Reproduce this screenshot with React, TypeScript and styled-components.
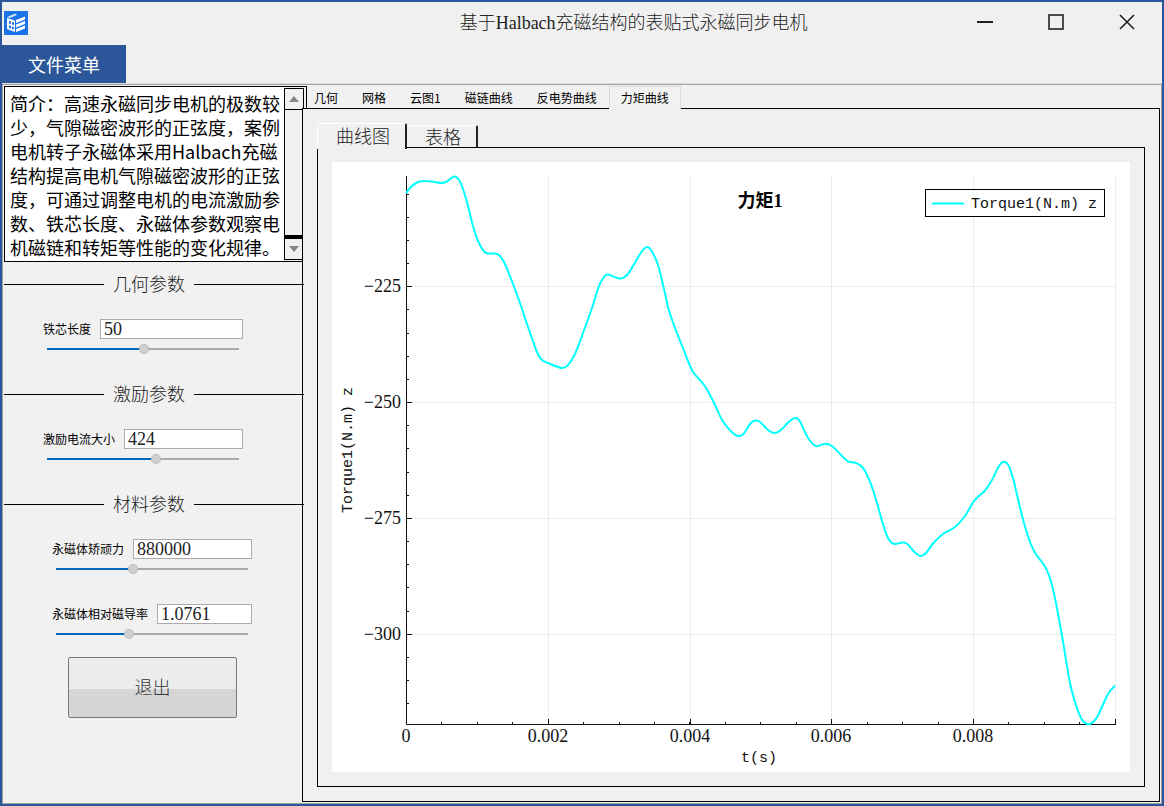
import React, { useId, useState } from "react";
import styled, { createGlobalStyle } from "styled-components";

const SANS = '"Noto Sans CJK SC", sans-serif';
const SERIF = '"Liberation Serif", "Noto Sans CJK SC", serif';
const MONO = '"Liberation Mono", "Noto Sans CJK SC", monospace';

const GlobalStyle = createGlobalStyle`
  *, *::before, *::after { box-sizing: border-box; }
  body { margin: 0; background: #f0f0f0; font-family: ${SANS}; color: #000; }
  button, input, textarea { font-family: inherit; margin: 0; }
`;

const Window = styled.div`
  display: flex;
  flex-direction: column;
  min-height: 100vh;
  border: 2px solid #2b579a;
  background: #f0f0f0;
`;

const TitleBar = styled.header`
  display: grid;
  grid-template-columns: 9fr auto 7fr;
  align-items: center;
  height: 43px;
  padding: 0 0 1px 2px;
`;

const Title = styled.h1`
  margin: 0;
  font: 300 18px/24px ${SERIF};
  color: #222;
`;

const WindowButtons = styled.div`
  display: flex;
  align-self: start;
  justify-content: flex-end;
`;

const WindowButton = styled.button`
  display: flex;
  align-items: center;
  justify-content: center;
  width: 71px;
  height: 40px;
  padding: 0;
  border: 0;
  background: transparent;
`;

const MenuBar = styled.nav`
  display: flex;
  height: 39px;
  border-bottom: 1px solid #dcdcdc;
`;

const MenuButton = styled.button`
  width: 124px;
  padding: 0;
  border: 0;
  background: #2b579a;
  color: #fff;
  font-size: 18px;
  line-height: 24px;
`;

const Workspace = styled.div`
  display: grid;
  flex: 1;
  grid-template-columns: 299px minmax(0, 1fr);
  border: 1px solid #a0a0a0;
  background: #f1f1f1;
`;

const Sidebar = styled.aside`
  display: flex;
  flex-direction: column;
  padding: 1px 0 0 1px;
`;

const Intro = styled.div`
  display: flex;
  width: 303px;
  height: 176px;
  border: 1px solid #000;
  background: #fff;
`;

const IntroText = styled.textarea`
  flex: 1;
  min-width: 0;
  padding: 4px 4px 0 5px;
  border: 0;
  outline: 0;
  overflow: hidden;
  resize: none;
  background: #fff;
  color: #000;
  font-size: 18px;
  line-height: 24px;
`;

const ScrollBar = styled.div`
  display: flex;
  flex-direction: column;
  width: 22px;
  padding: 1px 2px 1px 0;
  background: #f1f1f1;
`;

const ScrollButton = styled.button`
  display: flex;
  align-items: center;
  justify-content: center;
  height: 22px;
  padding: 0;
  border: 1px solid #000;
  background: #f1f1f1;
`;

const ScrollTrack = styled.div`
  flex: 1;
  border: solid #000;
  border-width: 0 1px 3px;
`;

const Sections = styled.div`
  position: relative;
  z-index: 1;
  display: flex;
  flex-direction: column;
  gap: 27px;
  width: 300px;
  margin-top: 10px;
`;

const Section = styled.section`
  display: flex;
  flex-direction: column;
  gap: 25px;
`;

const SectionTitle = styled.h2`
  display: grid;
  grid-template-columns: 100px auto 1fr;
  align-items: center;
  gap: 9px;
  margin: 0;
  font: 300 18px/22px ${SANS};
  color: #222;

  &::before, &::after {
    content: "";
    height: 1px;
    margin-top: 2px;
    background: #000;
  }
`;

const Fields = styled.div<{ $indent: number }>`
  display: flex;
  flex-direction: column;
  gap: 29px;
  width: 200px;
  margin-left: ${(p) => p.$indent}px;
`;

const FieldBox = styled.div`
  display: flex;
  flex-direction: column;
  gap: 4px;
`;

const FieldRow = styled.div`
  display: flex;
  align-items: center;
  gap: 9px;
`;

const Label = styled.label`
  font-size: 12px;
  line-height: 20px;
  white-space: nowrap;
`;

const ValueInput = styled.input`
  flex: 1;
  min-width: 0;
  height: 20px;
  padding: 1px 3px 0;
  border: 1px solid #ababab;
  background: #fff;
  color: #222;
  font: 18px/18px ${SERIF};
`;

const Slider = styled.input`
  appearance: none;
  height: 12px;
  margin: 0 4px;
  background: linear-gradient(to right, #0067b8 var(--level), #a9a9a9 var(--level)) center / 100% 2px no-repeat;

  &::-webkit-slider-thumb {
    appearance: none;
    width: 10px;
    height: 10px;
    border: 1px dotted #a9a9a9;
    border-radius: 50%;
    background: #cfcfcf;
  }
`;

const ExitButton = styled.button`
  width: 169px;
  height: 61px;
  margin: 17px 0 24px 64px;
  padding: 0 0 3px;
  border: 1px solid #787878;
  border-radius: 2px;
  background: linear-gradient(#ececec 52%, #d6d6d6 52%);
  color: #333;
  font: 300 18px/24px ${SANS};
`;

const Main = styled.main`
  display: flex;
  flex-direction: column;
  min-width: 0;
  padding: 0 1px 1px 0;
`;

const TabStrip = styled.div`
  display: flex;
  padding-top: 1px;
`;

const Tab = styled.button<{ $active: boolean }>`
  position: relative;
  height: ${(p) => (p.$active ? 23 : 22)}px;
  margin-bottom: ${(p) => (p.$active ? -1 : 0)}px;
  padding: 0 11px;
  border: 1px solid ${(p) => (p.$active ? "#d9d9d9" : "transparent")};
  border-bottom: 0;
  background: ${(p) => (p.$active ? "#f2f2f2" : "transparent")};
  color: #000;
  font-size: 12px;
  line-height: 18px;
  white-space: nowrap;
`;

const Pane = styled.div`
  display: flex;
  flex: 1;
  flex-direction: column;
  padding: 14px;
  border: 1px solid #000;
  background: #f0f0f0;
`;

const SubTabStrip = styled.div`
  display: flex;
  align-items: flex-end;
  height: 24px;
`;

const SubTab = styled.button<{ $active: boolean }>`
  position: relative;
  height: ${(p) => (p.$active ? 26 : 22)}px;
  margin-bottom: ${(p) => (p.$active ? -2 : 0)}px;
  padding: 0 15px 4px 18px;
  border: solid #fff;
  border-width: 1px 0 0 ${(p) => (p.$active ? 1 : 0)}px;
  border-right: 2px solid #222;
  border-radius: 2px 2px 0 0;
  background: #f0f0f0;
  color: #222;
  font: 300 18px/20px ${SANS};
`;

const PlotFrame = styled.div`
  display: flex;
  flex: 1;
  padding: 14px;
  border: 1px solid #000;
`;

const Plot = styled.svg`
  flex: 1;
  min-width: 0;
  width: 100%;
  background: #fff;
`;

const TickText = styled.text`
  font: 18px ${SERIF};
  fill: #111;
`;

const PlotText = styled.text`
  font: 15px ${MONO};
  fill: #111;
`;

const PlotTitle = styled.text`
  font: bold 18px ${SERIF};
  fill: #000;
`;

const INTRO =
  "简介：高速永磁同步电机的极数较少，气隙磁密波形的正弦度，案例电机转子永磁体采用Halbach充磁结构提高电机气隙磁密波形的正弦度，可通过调整电机的电流激励参数、铁芯长度、永磁体参数观察电机磁链和转矩等性能的变化规律。";

const TABS = ["几何", "网格", "云图1", "磁链曲线", "反电势曲线", "力矩曲线"];
const SUB_TABS = ["曲线图", "表格"];

/* Torque samples, in plot units. */
const CURVE: [number, number][] = [
  [74, 31], [79, 25], [85, 20.5], [91, 19], [100, 19.5], [108, 21], [114, 20], [122, 14.5], [127, 18],
  [131, 27], [136, 44], [141, 64], [146.3, 79.5], [152, 89.5], [156, 91.5], [163, 91.5], [168, 94],
  [173, 102], [181, 122], [188, 141], [196, 165], [205, 190], [210, 198], [216, 201], [230, 206],
  [236, 203], [243, 192], [251, 171], [260, 146], [267, 124], [272, 115], [276, 112.5], [288, 116.5],
  [295, 113], [301, 104], [309, 90.5], [315, 85], [320, 89.5], [326, 103], [331.3, 124], [336.3, 146],
  [341.3, 161.5], [349.7, 183], [358.7, 205.5], [363, 212.5], [371.3, 222], [376.3, 229.7], [383, 243], [389.5, 257],
  [396.3, 266.3], [403, 272.7], [408, 274], [412, 271.3], [418, 262], [423, 258.5], [428, 260], [436, 268],
  [442, 271], [448, 268.7], [458, 258.7], [463.5, 256], [468, 259.5], [476, 276], [484, 284],
  [493, 281.7], [500, 284], [510, 294], [516, 299.3], [525, 301.3], [531, 306], [536, 315],
  [541, 328], [545, 341], [550, 359], [555, 374], [559, 380.3], [563, 382], [572, 380.5], [577, 383.7],
  [583, 390.5], [589, 394], [594, 391], [601, 381.5], [611, 372], [623, 365], [633, 354], [641, 340.5],
  [646, 334.7], [653, 328.5], [660, 318], [667, 304], [672, 299.7], [676.3, 303], [681, 316],
  [685.3, 334], [691.3, 358.5], [698, 380], [703, 390.7], [713.7, 405.7], [719.7, 422], [724.7, 444.7], [731.3, 481.3],
  [738, 521], [744.7, 545.3], [750, 557.7], [756, 562.3], [761, 560], [766, 553.5], [776, 532], [783, 523.7],
];

function smoothPath(points: [number, number][]): string {
  let d = `M${points[0][0]} ${points[0][1]}`;
  for (let i = 0; i < points.length - 1; i++) {
    const a = points[Math.max(i - 1, 0)];
    const b = points[i];
    const c = points[i + 1];
    const e = points[Math.min(i + 2, points.length - 1)];
    d += ` C${b[0] + (c[0] - a[0]) / 6} ${b[1] + (c[1] - a[1]) / 6} ${c[0] - (e[0] - b[0]) / 6} ${c[1] - (e[1] - b[1]) / 6} ${c[0]} ${c[1]}`;
  }
  return d;
}

const X_MAJOR = [
  { at: 216.5, label: "0.002" },
  { at: 358.5, label: "0.004" },
  { at: 499.5, label: "0.006" },
  { at: 641.5, label: "0.008" },
  { at: 783.5, label: "" },
];
const Y_MAJOR = [
  { at: 124.5, label: "−225" },
  { at: 240.5, label: "−250" },
  { at: 356.5, label: "−275" },
  { at: 472.5, label: "−300" },
];
const X_MINOR = Array.from({ length: 19 }, (_, i) => Math.floor(74.3 + (i + 1) * 35.45) + 0.5);
const Y_MINOR = Array.from({ length: 23 }, (_, i) => Math.floor(32 + i * 23.17) + 0.5);

function TorqueChart() {
  return (
    <Plot viewBox="0 0 798 610" role="img" aria-label="力矩1">
      <g stroke="#ececec">
        {X_MAJOR.map((t) => <path key={t.at} d={`M${t.at} 15V562`} />)}
        {Y_MAJOR.map((t) => <path key={t.at} d={`M75 ${t.at}H784`} />)}
      </g>
      <g stroke="#111" fill="none">
        <path d="M74.5 14V562.5H784" />
        {X_MINOR.map((x) => <path key={x} d={`M${x} 560V563`} />)}
        {Y_MINOR.map((y) => <path key={y} d={`M74 ${y}H77`} />)}
        {X_MAJOR.map((t) => <path key={t.at} d={`M${t.at} 557V563`} />)}
        {Y_MAJOR.map((t) => <path key={t.at} d={`M74 ${t.at}H80`} />)}
      </g>
      <path d={smoothPath(CURVE)} fill="none" stroke="#00ffff" strokeWidth="2" />
      {Y_MAJOR.map((t) => (
        <TickText key={t.at} x="69" y={t.at + 5.5} textAnchor="end">{t.label}</TickText>
      ))}
      <TickText x="74" y="580" textAnchor="middle">0</TickText>
      {X_MAJOR.map((t) => (
        <TickText key={t.at} x={t.at - 0.5} y="580" textAnchor="middle">{t.label}</TickText>
      ))}
      <PlotTitle x="428" y="45" textAnchor="middle">力矩1</PlotTitle>
      <PlotText x="427" y="600" textAnchor="middle">t(s)</PlotText>
      <PlotText transform="translate(20 288) rotate(-90)" textAnchor="middle">Torque1(N.m) z</PlotText>
      <rect x="593.5" y="27.5" width="179" height="27" fill="#fff" stroke="#000" />
      <path d="M600 41.500H632" stroke="#00ffff" strokeWidth="2" />
      <PlotText x="639" y="46">Torque1(N.m) z</PlotText>
    </Plot>
  );
}

function Logo() {
  return (
    <svg width="24" height="24" viewBox="0 0 24 24" aria-hidden="true">
      <rect width="24" height="24" fill="#1a73e8" />
      <path d="M3 6L11 2.500L13 4L6 7z" fill="#cfe0f8" />
      <path d="M3 7L11 9.500V21L3 18z" fill="#fff" />
      <path d="M5 10L7 10.500V13L5 12.500zM8 11L10 11.500V14L8 13.500zM5 14.500L7 15V17.500L5 17zM8 15.500L10 16V18.500L8 18z" fill="#1a73e8" />
      <path d="M12 9L21 5.500V8.500L12 12zM12 13.500L21 10V13L12 16.500zM12 18L21 14.500V17.500L12 21z" fill="#fff" />
    </svg>
  );
}

type FieldProps = { label: string; value: string; position: number };

function Field({ label, value, position }: FieldProps) {
  const id = useId();
  const [text, setText] = useState(value);
  const [level, setLevel] = useState(position);
  return (
    <FieldBox>
      <FieldRow>
        <Label htmlFor={id}>{label}</Label>
        <ValueInput id={id} value={text} onChange={(e) => setText(e.target.value)} />
      </FieldRow>
      <Slider
        type="range"
        min={0}
        max={1000}
        value={level}
        aria-label={label}
        onChange={(e) => setLevel(Number(e.target.value))}
        style={{ "--level": `${level / 10}%` } as React.CSSProperties}
      />
    </FieldBox>
  );
}

export default function App() {
  const [tab, setTab] = useState(5);
  const [subTab, setSubTab] = useState(0);
  return (
    <Window>
      <GlobalStyle />
      <TitleBar>
        <Logo />
        <Title>基于Halbach充磁结构的表贴式永磁同步电机</Title>
        <WindowButtons>
          <WindowButton aria-label="最小化">
            <svg width="16" height="16"><path d="M0 8H16" stroke="#222" strokeWidth="2" /></svg>
          </WindowButton>
          <WindowButton aria-label="最大化">
            <svg width="16" height="16"><rect x="1" y="1" width="14" height="14" fill="none" stroke="#222" strokeWidth="1.6" /></svg>
          </WindowButton>
          <WindowButton aria-label="关闭">
            <svg width="16" height="16"><path d="M1 1L15 15M15 1L1 15" stroke="#222" strokeWidth="1.6" /></svg>
          </WindowButton>
        </WindowButtons>
      </TitleBar>
      <MenuBar>
        <MenuButton>文件菜单</MenuButton>
      </MenuBar>
      <Workspace>
        <Sidebar>
          <Intro>
            <IntroText readOnly aria-label="简介" value={INTRO} />
            <ScrollBar>
              <ScrollButton aria-label="向上滚动">
                <svg width="10" height="6"><path d="M0 6L5 0L10 6z" fill="#858585" /></svg>
              </ScrollButton>
              <ScrollTrack />
              <ScrollButton aria-label="向下滚动">
                <svg width="10" height="6"><path d="M0 0L5 6L10 0z" fill="#858585" /></svg>
              </ScrollButton>
            </ScrollBar>
          </Intro>
          <Sections>
            <Section>
              <SectionTitle>几何参数</SectionTitle>
              <Fields $indent={39}>
                <Field label="铁芯长度" value="50" position={505} />
              </Fields>
            </Section>
            <Section>
              <SectionTitle>激励参数</SectionTitle>
              <Fields $indent={39}>
                <Field label="激励电流大小" value="424" position={571} />
              </Fields>
            </Section>
            <Section>
              <SectionTitle>材料参数</SectionTitle>
              <Fields $indent={48}>
                <Field label="永磁体矫顽力" value="880000" position={396} />
                <Field label="永磁体相对磁导率" value="1.0761" position={374} />
              </Fields>
            </Section>
          </Sections>
          <ExitButton>退出</ExitButton>
        </Sidebar>
        <Main>
          <TabStrip role="tablist">
            {TABS.map((name, i) => (
              <Tab key={name} role="tab" aria-selected={i === tab} $active={i === tab} onClick={() => setTab(i)}>
                {name}
              </Tab>
            ))}
          </TabStrip>
          <Pane>
            <SubTabStrip role="tablist">
              {SUB_TABS.map((name, i) => (
                <SubTab key={name} role="tab" aria-selected={i === subTab} $active={i === subTab} onClick={() => setSubTab(i)}>
                  {name}
                </SubTab>
              ))}
            </SubTabStrip>
            <PlotFrame>
              <TorqueChart />
            </PlotFrame>
          </Pane>
        </Main>
      </Workspace>
    </Window>
  );
}
